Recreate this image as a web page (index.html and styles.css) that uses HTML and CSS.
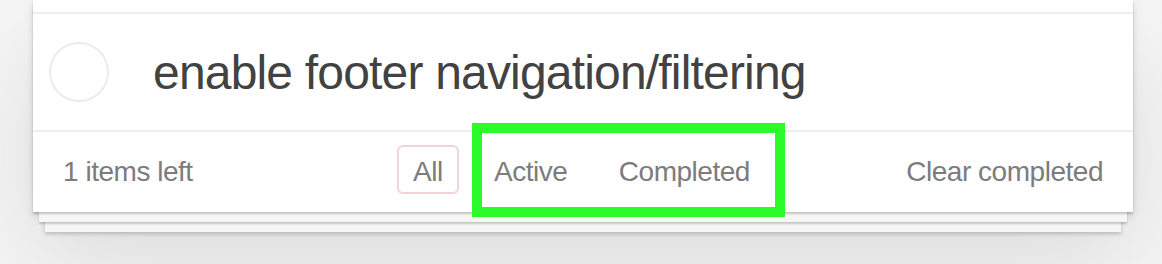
FILE: index.html
```html
<!DOCTYPE html>
<html>
<head>
<meta charset="utf-8">
<link rel="stylesheet" href="styles.css">
</head>
<body>
<section class="app">
  <ul class="todo-list">
    <li class="todo prev"></li>
    <li class="todo">
      <span class="toggle"></span>
      <label class="title">enable footer navigation/filtering</label>
    </li>
  </ul>
  <footer class="footer">
    <span class="count">1 items left</span>
    <ul class="filters">
      <li><a class="filter selected">All</a></li>
      <li><a class="filter">Active</a></li>
      <li><a class="filter">Completed</a></li>
    </ul>
    <button class="clear">Clear completed</button>
  </footer>
</section>
<div class="highlight"></div>
</body>
</html>
```

FILE: styles.css
```css
html, body {
  margin: 0;
  padding: 0;
}
body {
  background: #f5f5f5;
  font-family: "Liberation Sans", Arial, sans-serif;
  color: #4d4d4d;
  width: 1162px;
  height: 264px;
  overflow: hidden;
  position: relative;
}
.app {
  width: 1100px;
  margin-left: 33px;
  background: #fff;
  box-shadow:
    0 2px 2px rgba(0,0,0,0.2),
    0 16px 0 -6px #f6f6f6,
    0 18px 2px -6px rgba(0,0,0,0.2),
    0 32px 0 -12px #f6f6f6,
    0 34px 4px -12px rgba(0,0,0,0.2),
    0 4px 8px rgba(0,0,0,0.12),
    0 50px 100px rgba(0,0,0,0.1);
}
.todo-list {
  list-style: none;
  margin: 0;
  padding: 0;
}
.todo {
  display: flex;
  align-items: center;
  border-bottom: 2px solid #ededed;
}
.todo.prev {
  height: 12px;
}
.toggle {
  width: 60px;
  height: 60px;
  box-sizing: border-box;
  border: 2px solid #ececec;
  border-radius: 50%;
  margin-left: 16px;
  flex: none;
}
.title {
  padding: 31px 0 29px 44px;
  font-size: 48px;
  line-height: 56px;
  color: #424242;
  letter-spacing: -0.017em;
}
.footer {
  display: grid;
  grid-template-columns: 1fr auto 1fr;
  align-items: start;
  padding: 20px 30px;
  height: 40px;
  font-size: 28px;
  line-height: 40px;
  color: #7c7c7c;
  letter-spacing: -0.017em;
}
.count {
  justify-self: start;
}
.filters {
  list-style: none;
  margin: 0 0 0 -3px;
  padding: 0;
  display: block;
  white-space: nowrap;
}
.filters li {
  display: inline;
}
.filter {
  display: inline-block;
  padding: 9px 14px 4px;
  margin: -7px 6px;
  line-height: 32px;
  border: 2px solid transparent;
  border-radius: 6px;
  color: inherit;
}
.filter.selected {
  border-color: rgba(175,47,47,0.2);
}
.clear {
  justify-self: end;
  border: 0;
  background: none;
  padding: 0;
  margin: 0;
  font: inherit;
  line-height: 40px;
  color: inherit;
  letter-spacing: inherit;
}
.highlight {
  position: absolute;
  left: 472px;
  top: 123px;
  width: 313px;
  height: 94px;
  box-sizing: border-box;
  border: 10px solid #2bfa2b;
}
```
